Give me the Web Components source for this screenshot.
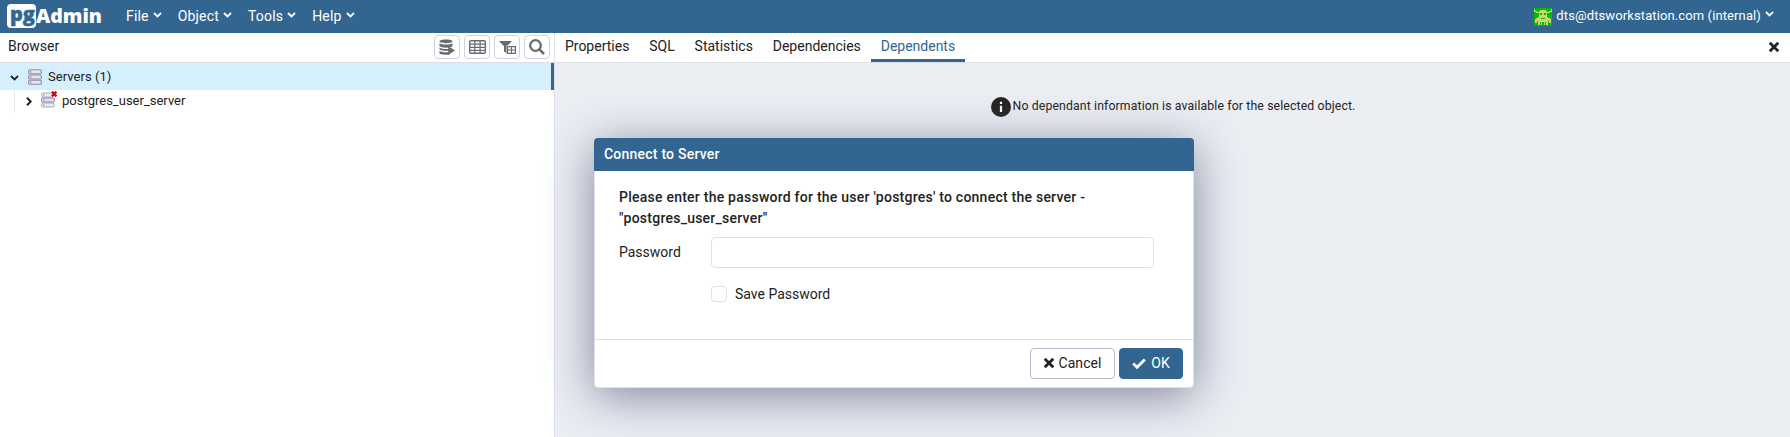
<!DOCTYPE html>
<html lang="en"><head><meta charset="utf-8"><title>pgAdmin</title>
<style>
html,body{margin:0;height:100%;overflow:hidden}
body{font:14px/21px Roboto,sans-serif;color:#222}
</style></head><body>
<pg-app></pg-app>
<script>
const def=(name,html,init)=>customElements.define(name,class extends HTMLElement{
  constructor(){super();const t=document.createElement('template');t.innerHTML=html;
    this.attachShadow({mode:'open'}).append(t.content.cloneNode(true));}
  connectedCallback(){if(init)init(this,this.shadowRoot);}
});
const ICONS={
  down:['0 0 9 6','<path d="M1 1l3.500 3.500L8 1" fill="none" stroke="currentColor" stroke-width="1.800"/>'],
  right:['0 0 6 9','<path d="M1 .8l3.700 3.700L1 8.200" fill="none" stroke="currentColor" stroke-width="2"/>'],
  close:['0 0 10 10','<path d="M1.700 1.700l6.600 6.600M8.300 1.700l-6.600 6.600" stroke="currentColor" stroke-width="2.800" stroke-linecap="square"/>'],
  check:['0 0 14 11','<path d="M1.200 5.600l3.900 3.700L12.800 1.500" fill="none" stroke="currentColor" stroke-width="2.800"/>'],
  info:['0 0 20 20','<circle cx="10" cy="10" r="10" fill="#222"/><path d="M8.900 4.800h2.200v2.100H8.900zM8.900 8.800h2.200v6.300H8.900z" fill="#fff"/>'],
  search:['0 0 16 16','<circle cx="6.500" cy="6.500" r="5.300" fill="none" stroke="currentColor" stroke-width="2.300"/><path d="M10.400 10.400l4.600 4.600" stroke="currentColor" stroke-width="2.600"/>'],
  table:['0 0 17 14','<rect x=".7" y=".7" width="15.600" height="12.600" rx="1.300" fill="none" stroke="currentColor" stroke-width="1.400"/><path d="M1 4.200h15M1 7.300h15M1 10.300h15M5.800 1v12M11.100 1v12" stroke="currentColor" stroke-width="1.200"/>'],
  filter:['0 0 17 13','<path d="M0 0h13L8 5.300v7.200L5 10.500V5.300z" fill="currentColor"/><rect x="7.500" y="4.500" width="9.500" height="8.500" fill="#fff"/><path d="M8.600 5.600h7.800v6.800H8.600zM8.600 9h7.800M12.500 5.600v6.800" fill="none" stroke="currentColor" stroke-width="1.200"/>'],
  query:['0 0 16 16','<path d="M.5 2.300C.5-.2 13.500-.2 13.500 2.300S.5 4.800.5 2.300zM.5 4.300c2 1.700 11 1.700 13 0v3c-2 1.800-11 1.800-13 0zM.5 8.500c2 1.700 8 1.700 10 1.200v1.700c-3 .6-8 .4-10-1zM.5 12c2 1.400 7 1.500 10 1.100v2.300C5 16 1.500 15.500.5 14.500z" fill="currentColor"/><path d="M9.200 7l6.800 4.500-6.800 4.500z" fill="currentColor"/>'],
  servers:['0 0 14 16','<g fill="#e6e4ee" stroke="#8f8ca0" stroke-width="1.100"><rect x=".6" y=".8" width="12.800" height="4" rx="1.200"/><rect x=".6" y="6" width="12.800" height="4" rx="1.200"/><rect x=".6" y="11.200" width="12.800" height="4" rx="1.200"/></g><path d="M2 2.800h1.500M2 8h1.500M2 13.200h1.500" stroke="#77749a"/>'],
  offline:['0 0 16 17','<g fill="#eaeaea" stroke="#aaa"><rect x=".5" y="2" width="12.800" height="4" rx="1.200"/><rect x=".5" y="12" width="12.800" height="4" rx="1.200"/><rect x=".5" y="7" width="12.800" height="4" rx="1.200" stroke="#8582b8" fill="#e2e0f2"/></g><path d="M2 4h1.500M2 9h1.500M2 14h1.500" stroke="#888"/><rect x="10" y="0" width="6" height="6" fill="#fff"/><path d="M10.800.6l4.600 4.800M15.400.6l-4.600 4.800" stroke="#d0021b" stroke-width="2.300"/>'],
  avatar:['0 0 18 18','<rect width="18" height="18" fill="#0b0"/><path d="M0 1h1v2h2v1h2V3h1V2h6v1h1v1h2V3h2V1h1v3h-2v1h-3v4h1v1h2v1h1v4h-2v-2h-1v4h-2v-3h-1v3h-1v-3H8v3H7v-3H6v3H4v-4H3v2H1v-4h1v-1h2V9h1V5H2V4H0z" fill="#cdd574"/><path d="M6 5h2v2H6zM10 5h2v2h-2zM7 10h4v1H7z" fill="#0b0"/>']
};
def('pg-icon','<style>:host{display:block;flex:none}svg{display:block;width:100%;height:100%}</style><svg></svg>',(e,r)=>{
  const [v,p]=ICONS[e.getAttribute('name')],s=r.querySelector('svg');s.setAttribute('viewBox',v);s.innerHTML=p;
  const b=v.split(' ');e.style.width=b[2]+'px';e.style.height=b[3]+'px';});
def('pg-logo',`<style>:host{display:block;width:96px;height:33px}svg{display:block}</style>
<svg width="96" height="33"><rect x="0" y="4" width="29" height="24" rx="4" fill="#fff"/>
<g font-family="Open Sans" font-weight="800"><text x="3" y="20.500" font-size="19" textLength="25" lengthAdjust="spacingAndGlyphs" fill="#326690" stroke="#326690" stroke-width=".4">pg</text>
<text x="29" y="22.500" font-size="19.500" textLength="66" lengthAdjust="spacingAndGlyphs" fill="#fff">Admin</text></g></svg>`);
def('pg-menu','<style>:host{display:flex;align-items:center;gap:4px;letter-spacing:.18px}pg-icon{margin-top:-3px}</style><slot></slot><pg-icon name="down"></pg-icon>');
def('pg-navbar',`<style>:host{display:flex;height:33px;box-sizing:border-box;background:#326690;color:#fff;align-items:center;padding:0 16px 0 7px;line-height:21px}
nav{display:flex;gap:16px;margin-left:23px;padding-bottom:1px}
.user{display:flex;align-items:center;margin-left:auto}.user pg-menu{margin-left:4px;padding-bottom:2px;font-size:13px;letter-spacing:.11px}</style>
<pg-logo></pg-logo><nav><pg-menu>File</pg-menu><pg-menu>Object</pg-menu><pg-menu>Tools</pg-menu><pg-menu>Help</pg-menu></nav>
<div class="user"><pg-icon name="avatar"></pg-icon><pg-menu>dts@dtsworkstation.com (internal)</pg-menu></div>`);
def('pg-tool','<style>:host{display:flex;box-sizing:border-box;width:26px;height:24px;border:1px solid #cfd3e0;border-radius:4px;align-items:center;justify-content:center;color:#6b6b6b;background:#fff}</style><slot></slot>');
def('pg-tree-row',`<style>:host{display:flex;box-sizing:border-box;height:23px;align-items:center;font-size:13px;padding-bottom:2px}
:host([selected]){height:27px;background:#d6effc;border-right:3px solid #326690;padding-bottom:0;letter-spacing:.05px}</style><slot></slot>`);
def('pg-browser',`<style>:host{display:block;box-sizing:border-box;width:555px;border-right:1px solid #dde0e6;background:#fff}
header{display:flex;box-sizing:border-box;height:30px;border-bottom:1px solid #dde0e6;padding:2px 4px 0 8px;gap:4px;align-items:flex-start}
header span{margin-right:auto;line-height:23px}
.root{padding-left:10px}.root .i{margin:0 6px 0 9px}
.root pg-icon:first-child{margin-top:2px}
.child{margin-left:14px;border-left:1px solid #e6e8f0;padding-left:11px}.child .i{margin:-2px 5px 0 9px}.child pg-icon:first-child{margin-top:2px}</style>
<header><span>Browser</span><pg-tool><pg-icon name="query"></pg-icon></pg-tool><pg-tool><pg-icon name="table"></pg-icon></pg-tool><pg-tool><pg-icon name="filter"></pg-icon></pg-tool><pg-tool><pg-icon name="search"></pg-icon></pg-tool></header>
<pg-tree-row selected class="root"><pg-icon name="down"></pg-icon><pg-icon class="i" name="servers"></pg-icon>Servers (1)</pg-tree-row>
<pg-tree-row class="child"><pg-icon name="right"></pg-icon><pg-icon class="i" name="offline"></pg-icon>postgres_user_server</pg-tree-row>`);
def('pg-tab','<style>:host{display:block;box-sizing:border-box;height:29px;padding:2px 9.950px 0;line-height:22px}:host([active]){color:#326690;border-bottom:3px solid #326690}</style><slot></slot>');
def('pg-details',`<style>:host{display:block;flex:1;background:#ebeef3}
header{display:flex;box-sizing:border-box;height:30px;background:#fff;border-bottom:1px solid #dde0e6;padding-right:11px}
header>pg-icon{margin:9px 0 0 auto}
p{display:flex;justify-content:center;align-items:center;gap:2px;margin:34px 0 0 1px;height:20px;font-size:12.250px;line-height:20px;letter-spacing:.14px}p span{margin-top:-2px}</style>
<header><pg-tab>Properties</pg-tab><pg-tab>SQL</pg-tab><pg-tab>Statistics</pg-tab><pg-tab>Dependencies</pg-tab><pg-tab active>Dependents</pg-tab><pg-icon name="close"></pg-icon></header>
<p><pg-icon name="info"></pg-icon><span>No dependant information is available for the selected object.</span></p>`);
def('pg-button','<style>:host{display:flex;box-sizing:border-box;height:31px;align-items:center;justify-content:center;gap:5px;border:1px solid #b5bace;border-radius:4px;font-weight:450;letter-spacing:.05px;width:85px;padding-bottom:1px}:host([primary]){width:64px;background:#326690;border-color:#326690;color:#fff}</style><slot></slot>');
def('pg-dialog',`<style>:host{display:flex;flex-direction:column;box-sizing:border-box;width:600px;height:250px;background:#fff;border:1px solid #dde0e6;border-radius:4px;box-shadow:0 8px 48px #7f869c}
h1{margin:-1px -1px 0;height:33px;box-sizing:border-box;background:#326690;color:#fff;border-radius:4px 4px 0 0;font:480 14px/32px Roboto,sans-serif;letter-spacing:.22px;padding-left:10px}
main{flex:1;padding:16px 39px 0 24px}footer{display:flex;justify-content:flex-end;gap:4px;height:48px;box-sizing:border-box;border-top:1px solid #dde0e6;padding:8px 10px 0}</style>
<h1>Connect to Server</h1><main><slot></slot></main><footer><pg-button><pg-icon name="close"></pg-icon>Cancel</pg-button><pg-button primary><pg-icon name="check"></pg-icon>OK</pg-button></footer>`);
def('pg-password-form',`<style>:host{display:block}b{display:block;font-weight:490;line-height:21px;letter-spacing:.24px}
.f{display:grid;grid-template-columns:92px 1fr;margin-top:8px;align-items:center}
input{display:block;box-sizing:border-box;border:1px solid #dde0e6;border-radius:4px;margin:0;background:#fff;appearance:none}
.p{height:31px;width:443px}.c{display:flex;grid-column:2;gap:8px;align-items:center;margin-top:16px}.c input{width:16px;height:16px;margin-top:-2px}</style>
<b>Please enter the password for the user 'postgres' to connect the server -<br>"postgres_user_server"</b>
<div class="f"><span>Password</span><input class="p" type="password"><label class="c"><input type="checkbox">Save Password</label></div>`);
def('pg-app',`<style>:host{display:grid;grid-template-rows:33px 1fr;height:437px;position:relative}
.body{display:flex;min-height:0}pg-dialog{position:absolute;left:594px;top:138px}</style>
<pg-navbar></pg-navbar><div class="body"><pg-browser></pg-browser><pg-details></pg-details></div>
<pg-dialog><pg-password-form></pg-password-form></pg-dialog>`);
</script></body></html>
